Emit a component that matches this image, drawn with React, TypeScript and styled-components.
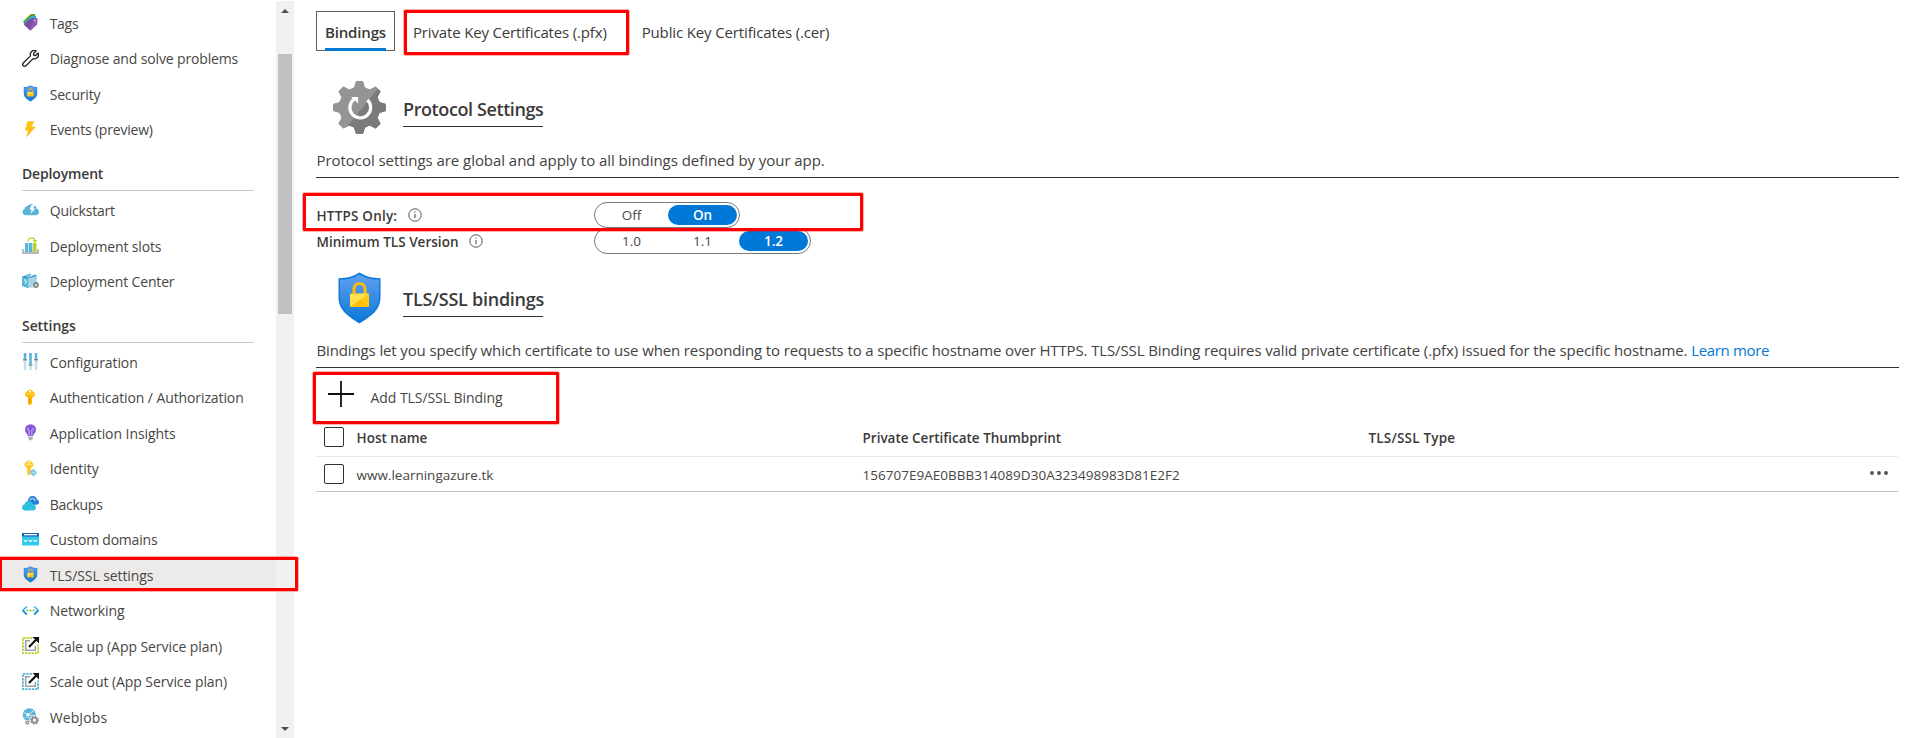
import React, { ReactNode } from 'react';
import styled, { createGlobalStyle, css } from 'styled-components';

const GlobalStyle = createGlobalStyle`
  * { box-sizing: border-box; }
  body {
    margin: 0;
    background: #fff;
    color: #3b3a39;
    font-family: "Open Sans", "Noto Sans", sans-serif;
    overflow: hidden;
  }
`;

const Page = styled.div`
  position: relative;
  display: flex;
  width: 100%;
  height: 738px;
  overflow: hidden;
`;

/* ---------- sidebar ---------- */

const Sidebar = styled.nav`
  width: 276px;
  flex: none;
  padding-top: 6.5px;
`;

const NavItem = styled.a<{ $selected?: boolean }>`
  display: flex;
  align-items: center;
  height: 31.5px;
  margin-bottom: 4px;
  padding-left: 22px;
  background: ${(p) => (p.$selected ? '#edebe9' : 'transparent')};
`;

const NavIcon = styled.span`
  display: flex;
  width: 17px;
  height: 17px;
  margin: 1px 10.7px 0 0;
  flex: none;
`;

const NavLabel = styled.span<{ $track: number }>`
  padding-top: 3px;
  color: #484644;
  font-size: 14px;
  line-height: 20px;
  white-space: nowrap;
  letter-spacing: ${(p) => p.$track}px;
`;

const NavHeading = styled.h2<{ $track: number }>`
  height: 44.5px;
  margin: -2px 22px 2.75px;
  padding-top: 17.5px;
  border-bottom: 1px solid #c8c8c8;
  font-size: 14px;
  font-weight: 600;
  line-height: 20px;
  letter-spacing: ${(p) => p.$track}px;
`;

const ScrollTrack = styled.div`
  display: flex;
  flex-direction: column;
  align-items: center;
  width: 18px;
  flex: none;
  margin-top: 1px;
  background: #f1f1f1;
`;

const ScrollArrow = styled.div<{ $down?: boolean }>`
  width: 8px;
  height: 4px;
  background: #505050;
  ${(p) =>
    p.$down
      ? css`
          margin: auto 0 7px;
          clip-path: polygon(0 0, 100% 0, 50% 100%);
        `
      : css`
          margin: 8px 0 0;
          clip-path: polygon(50% 0, 100% 100%, 0 100%);
        `}
`;

const ScrollThumb = styled.div`
  width: 14px;
  height: 260px;
  margin-top: 41px;
  background: #c1c1c1;
`;

/* ---------- main pane ---------- */

const Main = styled.main`
  flex: 1;
  padding: 11px 19px 0 22px;
`;

const Tabs = styled.div`
  display: flex;
  height: 40px;
`;

const Tab = styled.button<{ $active?: boolean; $track: number; $gap?: number }>`
  display: flex;
  height: 40px;
  margin: 0 0 0 ${(p) => p.$gap ?? 0}px;
  padding: 0;
  border: 0;
  background: none;
  color: inherit;
  font: 400 15px/42px "Open Sans", "Noto Sans", sans-serif;
  letter-spacing: ${(p) => p.$track}px;
  white-space: nowrap;
  ${(p) =>
    p.$active &&
    css`
      width: 79px;
      justify-content: center;
      border: 1px solid #5f5f5f;
      font-weight: 600;
      line-height: 40px;
    `}
`;

const TabText = styled.span`
  height: 39px;
  width: 61px;
  border-bottom: 3px solid #0078d4;
`;

const SectionHead = styled.header<{ $compact?: boolean }>`
  display: flex;
  align-items: flex-start;
  height: ${(p) => (p.$compact ? 84 : 97)}px;
  padding: ${(p) => (p.$compact ? 17.5 : 30)}px 0 0 17px;
`;

const SectionTitle = styled.h1<{ $track: number; $drop: number }>`
  width: 140px;
  margin: ${(p) => p.$drop}px 0 0 17px;
  border-bottom: 1px solid #323130;
  font-size: 18px;
  font-weight: 600;
  line-height: 34px;
  white-space: nowrap;
  letter-spacing: ${(p) => p.$track}px;
`;

const Description = styled.p<{ $track: number }>`
  height: 30px;
  margin: 0;
  padding-left: 0.5px;
  border-bottom: 1px solid #323130;
  color: #444240;
  font-size: 15px;
  line-height: 25px;
  white-space: nowrap;
  letter-spacing: ${(p) => p.$track}px;
`;

const Link = styled.a`
  color: #0078d4;
  letter-spacing: -0.33px;
`;

const Options = styled.div`
  padding-top: 24px;
`;

const OptionRow = styled.div`
  display: flex;
  align-items: center;
  height: 26px;
`;

const OptionLabel = styled.div<{ $track: number }>`
  display: flex;
  align-items: center;
  gap: 10.5px;
  width: 278px;
  padding-left: 0.5px;
  font-size: 13.5px;
  font-weight: 600;
  letter-spacing: ${(p) => p.$track}px;
  & > span {
    padding-top: 2px;
    line-height: 20px;
  }
`;

const Toggle = styled.div`
  display: flex;
  gap: 2px;
  height: 26px;
  padding: 2px;
  border: 1px solid #7a7a7a;
  border-radius: 13px;
`;

const ToggleCell = styled.span<{ $on?: boolean }>`
  width: 69px;
  height: 20px;
  border-radius: 10px;
  background: ${(p) => (p.$on ? '#0078d7' : 'transparent')};
  color: ${(p) => (p.$on ? '#fff' : '#484644')};
  font-size: 13.5px;
  font-weight: ${(p) => (p.$on ? 600 : 400)};
  line-height: 20px;
  text-align: center;
`;

const AddButton = styled.button`
  display: flex;
  align-items: center;
  height: 50px;
  padding: 2px 0 0 12px;
  border: 0;
  background: none;
  color: #484644;
  font: 400 14px/20px "Open Sans", "Noto Sans", sans-serif;
  letter-spacing: -0.06px;
  & > span {
    margin: 8px 0 0 16.5px;
  }
`;

const TableRow = styled.div<{ $head?: boolean }>`
  display: grid;
  grid-template-columns: 40.5px 506px 506px 1fr auto;
  align-items: center;
  height: ${(p) => (p.$head ? 39 : 35)}px;
  margin-right: 1px;
  padding-right: 10px;
  border-bottom: 1px solid ${(p) => (p.$head ? '#e8e8e8' : '#c4c4c4')};
  color: ${(p) => (p.$head ? '#3b3a39' : '#484644')};
  font-size: 13.5px;
  font-weight: ${(p) => (p.$head ? 600 : 400)};
`;

const Checkbox = styled.span`
  width: 20px;
  height: 20px;
  margin-left: 8px;
  border: 1px solid #323130;
  border-radius: 2px;
`;

const Cell = styled.span<{ $track?: number }>`
  padding-top: 1px;
  line-height: 20px;
  letter-spacing: ${(p) => p.$track ?? 0}px;
`;

const RowMenu = styled.span`
  display: flex;
  padding-bottom: 3px;
`;

const Marker = styled.div<{ $x: number; $y: number; $w: number; $h: number }>`
  position: absolute;
  left: ${(p) => p.$x}px;
  top: ${(p) => p.$y}px;
  width: ${(p) => p.$w}px;
  height: ${(p) => p.$h}px;
  border: 3px solid #ff0000;
  border-radius: 1px;
  box-shadow: 0 0 0 0.5px rgba(255, 0, 0, 0.6);
`;

/* ---------- icons ---------- */

const Glyph = ({ children }: { children: ReactNode }) => (
  <svg width="17" height="17" viewBox="0 0 17 17" fill="none">
    {children}
  </svg>
);

const TagsIcon = () => (
  <Glyph>
    <path d="M1 7.500 8.500.3 13 0v3L4 11 1 7.500Z" fill="#57a300" />
    <path d="M1.500 9 9 2 14 1.800V6L6 14 1.500 9Z" fill="#32a9d9" />
    <path d="m2.200 9.800 6.300-5.400 6.300-.3.600.8-.3 5.600-6 5.600a1.200 1.200 0 0 1-1.600 0L2.200 11Z" fill="#7f4aa3" />
    <path d="M12.500 4.800 15.400 5l-.3 5.400-6 5.600-1.500-.3Z" fill="#9b6cc0" opacity=".55" />
    <circle cx="12.700" cy="6.400" r=".9" fill="#d7c4e6" />
  </Glyph>
);

const WrenchIcon = () => (
  <Glyph>
    <path
      d="M14.200.9 11.600 3.500l.2 1.800 1.800.2 2.500-2.500c.8 2.300.1 4.300-1.600 5.300-1.200.7-2.300.7-3.400.3L4 15.700a1.900 1.900 0 0 1-2.700-2.700l7.200-7.100c-.5-1.200-.4-2.400.4-3.600C10.100.6 12.100 0 14.200.9Z"
      stroke="#222"
      strokeWidth="1.300"
      strokeLinejoin="round"
    />
  </Glyph>
);

const ShieldShapes = ({ id }: { id: string }) => (
  <>
    <defs>
      <linearGradient id={id} x1="0" y1="0" x2="0" y2="1">
        <stop offset="0" stopColor="#5ea0ef" />
        <stop offset="1" stopColor="#0f78d8" />
      </linearGradient>
    </defs>
    <path
      d="M5.500 6.200C14 6.200 19 5 26.500.6 34 5 39 6.200 47.500 6.200V25c0 14-10.500 19.500-21 26.500C16 44.500 5.500 39 5.500 25V6.200Z"
      fill="#0f7ad9"
    />
    <path
      d="M7 7.600C15 7.500 19.500 6.400 26.500 2.400 33.500 6.400 38 7.500 46 7.600V25c0 12.600-9.500 18-19.500 24.700C16.500 43 7 37.600 7 25V7.600Z"
      fill={`url(#${id})`}
    />
    <path
      d="M21 22v-5a5.500 5.500 0 0 1 11 0v5"
      fill="none"
      stroke="#f9b90c"
      strokeWidth="3.200"
    />
    <rect x="17" y="21.500" width="19" height="13.500" rx=".8" fill="#ffc812" />
    <path d="m17 22 19-.5L17 35Z" fill="#ffdf4a" />
    <path d="M17 35 27 28l9 7Z" fill="#ffbd02" />
  </>
);

const SmallShieldIcon = ({ id }: { id: string }) => (
  <svg width="17" height="17" viewBox="0 0 53 53">
    <ShieldShapes id={id} />
  </svg>
);

const BoltIcon = () => (
  <Glyph>
    <path d="M5.500.2h6.800L9.600 5.800h3.900L4.200 16.500l2-6.900H2.800L5.500.2Z" fill="#fcc419" />
    <path d="M9.600 5.800h3.900L4.200 16.500l2-6.900Z" fill="#ffb900" opacity=".6" />
  </Glyph>
);

const QuickstartIcon = () => (
  <Glyph>
    <path
      d="M3.200 13.200A3.200 3.200 0 0 1 2.600 7 C2.500 5.200 4 4 5.400 4.300 6.500 2 10.500 1.400 12 3.600c1.600-.2 2.600 1.400 2.300 2.900 1.700.3 2.700 1.700 2.700 3.400 0 1.900-1.300 3.300-3.200 3.300Z"
      fill="#59b4d9"
    />
    <path d="M9.500 3h3.200L11 6.500h2.400L8.300 12l1.500-4.300H7.600Z" fill="#fff" />
  </Glyph>
);

const SlotsIcon = () => (
  <Glyph>
    <path d="M1 12v4h15v-4" stroke="#a0a1a2" strokeWidth="1.400" />
    <path d="M3 6h3.400v9H3zM7 6h3.400v9H7z" fill="#59b4d9" />
    <path d="M11 6h3.500v9H11z" fill="#b8d432" />
    <path d="M6 4.200C6.500-.1 12.300-.1 12.800 3.500" stroke="#b8d432" strokeWidth="1.200" />
    <path d="M10.500 3h4.800l-2.400 3Z" fill="#b8d432" />
  </Glyph>
);

const CenterIcon = () => (
  <Glyph>
    <path d="m0 3.800 6-2.200 2.500 2-2 1.800V15L0 12.800Z" fill="#3999c6" />
    <path d="m0 4 6 1.500V15L0 12.800Z" fill="#59b4d9" />
    <path d="m3 2.300 5-2 1.500 1.700L6 5Z" fill="#7ac3e2" />
    <path d="m7 4.600 6-3.200 2 1.400-6 3Z" fill="#3999c6" />
    <path d="M7 5.200 15 3v8l-4 3.500-4 .2Z" fill="#a5d6ea" />
    <path d="M3 6v2l1.500.5L3 11" stroke="#fff" />
    <circle cx="14" cy="12" r="2" stroke="#8a8b8c" strokeWidth="1.800" />
  </Glyph>
);

const SlidersIcon = () => (
  <Glyph>
    <path d="M3 0v6M8.500 0v11M14 0v6" stroke="#59b4d9" strokeWidth="2.600" />
    <path d="M3 7v10M8.500 12v5M14 7v10" stroke="#bfe1ef" strokeWidth="2.600" />
    <path d="M1 6.800h4M6.500 12h4M12 6.800h4" stroke="#8a8b8c" strokeWidth="1.400" />
  </Glyph>
);

const KeyIcon = () => (
  <Glyph>
    <path d="M8 .4c1 0 5 3 5 4.600 0 1.500-1.200 3-2.900 3.700v5.500L8 16.600l-2-2.200V8.700C4.300 8 3 6.500 3 5 3 3.400 7 .4 8 .4Z" fill="#ffb900" />
    <path d="M4.300 5.200h7.400" stroke="#ffd94f" strokeWidth="1.200" />
    <circle cx="8" cy="2.700" r="1.100" fill="#fff" />
    <path d="M7.500 9v5.500" stroke="#e68a00" strokeWidth=".9" />
  </Glyph>
);

const BulbIcon = () => (
  <Glyph>
    <path d="M8.500.2a5.500 5.500 0 0 1 5.500 5.500c0 3-2.800 4-3 6.600H6C5.800 9.700 3 8.700 3 5.700A5.500 5.500 0 0 1 8.500.2Z" fill="#8257d8" />
    <path d="M7.200 11.500V6.200C5.500 6.500 5 4.200 6.700 4M9.800 11.500V6.200c1.700.3 2.200-2 .5-2.200" stroke="#c5a8f0" strokeWidth="1.100" />
    <path d="M6.200 13h4.600v1.600l-1 1.600H7.200l-1-1.600Z" fill="#b3b3b5" />
  </Glyph>
);

const IdentityIcon = () => (
  <Glyph>
    <path d="M7 .2c1 0 4.700 2.800 4.700 4.300 0 1.400-1.100 2.800-2.700 3.400v5.900l-2 2-1.900-2V7.900C3.500 7.300 2.300 5.900 2.300 4.500 2.300 3 6 .2 7 .2Z" fill="#fcc92f" />
    <path d="M3.600 4.700h6.800" stroke="#ffe27a" strokeWidth="1.200" />
    <circle cx="7" cy="2.300" r="1" fill="#fff" />
    <path d="m11.300 8.800 3.700 3.800-3.700 3.800-3.700-3.800Z" fill="#5fb8da" stroke="#cfeaf5" strokeWidth=".6" />
    <path d="M11.300 10v5M9 12.600h4.600" stroke="#d9f1fa" strokeWidth=".7" />
  </Glyph>
);

const BackupsIcon = () => (
  <Glyph>
    <path d="M6 6.500C6 3 8 1 10.700 1c2.400 0 3.800 1.400 4 3.400C16 4.700 17 5.600 17 7c0 1.700-1 2.700-2.600 2.700H8Z" fill="#1f7fd8" />
    <path d="M8 5.300c1.500-3 5-2 5 1" stroke="#b8dcf8" strokeWidth="1.200" />
    <path d="M3.500 15.600C1.500 15.600 0 14.300 0 12.500 0 11 1 9.900 2.500 9.600 2.900 7.300 4.500 6 6.700 6c2.100 0 3.800 1.300 4.200 3.400 1.800.1 3 1.300 3 3 0 1.900-1.400 3.200-3.300 3.200Z" fill="#2fbfe0" />
  </Glyph>
);

const DomainsIcon = () => (
  <Glyph>
    <rect x="0" y="2" width="17" height="12.500" rx=".5" fill="#32c8ea" />
    <rect x="0" y="2" width="17" height="3.500" fill="#1763b3" />
    <rect x="2" y="3" width="13" height="1.300" fill="#fff" />
    <path d="m2 8.700.8 2.200.8-1.800.8 1.800.8-2.200M6.800 8.700l.8 2.200.8-1.800.8 1.800.8-2.200M11.600 8.700l.8 2.200.8-1.800.8 1.800.8-2.200" stroke="#fff" strokeWidth=".8" />
  </Glyph>
);

const NetworkIcon = () => (
  <Glyph>
    <path d="M4.700 4.500.9 8.500l3.800 4M12.300 4.500l3.800 4-3.800 4" stroke="#35b6ee" strokeWidth="1.600" />
    <path d="M.9 8.500l3.800 4M16.100 8.500l-3.800 4" stroke="#1583dc" strokeWidth="1.600" />
    <g fill="#76bc2d">
      <circle cx="5.300" cy="8.500" r="1" />
      <circle cx="8.500" cy="8.500" r="1" />
      <circle cx="11.700" cy="8.500" r="1" />
    </g>
  </Glyph>
);

const ScaleIcon = ({ color }: { color: string }) => (
  <Glyph>
    <path d="M10 .9H.9v15.200h15.200V7.500" stroke={color} strokeWidth="1.800" strokeDasharray="2.400 .9" />
    <path d="M8 3.700H3.700v9.600h9.600V9" stroke="#a0a1a2" strokeWidth="1.600" />
    <path d="m7 10 7-7.300" stroke="#111" strokeWidth="2.100" />
    <path d="M10.500 0H17v6.500Z" fill="#111" />
  </Glyph>
);

const WebJobsIcon = () => (
  <Glyph>
    <circle cx="7.300" cy="6.800" r="6.600" fill="#59b4d9" />
    <path d="M2 4.500 6 7l6-4.500M6 7l2 5.500M3 10.500 6 7l7 1" stroke="#d8eef7" strokeWidth="1" />
    <circle cx="6" cy="6.500" r="1.600" fill="#fff" />
    <circle cx="12.500" cy="12.200" r="4.600" fill="#fff" />
    <circle cx="12.500" cy="12.200" r="2.600" stroke="#8a8b8c" strokeWidth="1.900" />
    <circle cx="12.500" cy="12.200" r="3.900" stroke="#8a8b8c" strokeWidth="1.200" strokeDasharray="1.500 1.560" />
    <circle cx="5.300" cy="14.500" r="2.500" fill="#fff" />
    <circle cx="5.300" cy="14.500" r="1.400" stroke="#8a8b8c" strokeWidth="1.300" />
  </Glyph>
);

const GEAR_POINTS = Array.from({ length: 8 }, (_, i) => {
  const a = (i * Math.PI) / 4;
  return [
    [-7.6, -18.6],
    [-5, -20],
    [-3.2, -26],
    [3.2, -26],
    [5, -20],
    [7.6, -18.6],
  ].map(([x, y]) =>
    [26.5 + x * Math.cos(a) - y * Math.sin(a), 26.5 + x * Math.sin(a) + y * Math.cos(a)]
      .map((n) => n.toFixed(2))
      .join(','),
  );
})
  .flat()
  .join(' ');

const GearIcon = () => (
  <svg width="53" height="53" viewBox="0 0 53 53">
    <defs>
      <clipPath id="gear-shade">
        <path d="M53 0v53H8L48 4Z" />
      </clipPath>
    </defs>
    <polygon points={GEAR_POINTS} fill="#949494" stroke="#949494" strokeLinejoin="round" />
    <polygon points={GEAR_POINTS} fill="#7a7a7a" stroke="#7a7a7a" strokeLinejoin="round" clipPath="url(#gear-shade)" />
    <path d="M34.500 19A10.400 10.400 0 1 1 21 18.200" fill="none" stroke="#fff" strokeWidth="3.200" />
    <path d="M18 16h7.200v6.500Z" fill="#fff" />
  </svg>
);

const BigShieldIcon = () => (
  <svg width="53" height="53" viewBox="0 0 53 53">
    <ShieldShapes id="shield-large" />
  </svg>
);

const InfoIcon = () => (
  <svg width="14" height="14" viewBox="0 0 14 14" fill="none">
    <circle cx="7" cy="7" r="6.200" stroke="#444" strokeWidth=".9" />
    <path d="M7 6v4.300M7 3.600v1.200" stroke="#444" />
  </svg>
);

const PlusIcon = () => (
  <svg width="26" height="26" viewBox="0 0 26 26">
    <path d="M0 13h26M13 0v26" stroke="#111" strokeWidth="1.800" />
  </svg>
);

const MoreIcon = () => (
  <svg width="18" height="4" viewBox="0 0 18 4" fill="#4f4f4f">
    <circle cx="2" cy="2" r="1.900" />
    <circle cx="9" cy="2" r="1.900" />
    <circle cx="16" cy="2" r="1.900" />
  </svg>
);

/* ---------- data ---------- */

type Entry = { label: string; track: number; icon: ReactNode; selected?: boolean };
type Group = { heading?: string; track?: number; entries: Entry[] };

const GROUPS: Group[] = [
  {
    entries: [
      { label: 'Tags', track: -0.3, icon: <TagsIcon /> },
      { label: 'Diagnose and solve problems', track: -0.14, icon: <WrenchIcon /> },
      { label: 'Security', track: -0.18, icon: <SmallShieldIcon id="shield-security" /> },
      { label: 'Events (preview)', track: -0.19, icon: <BoltIcon /> },
    ],
  },
  {
    heading: 'Deployment',
    track: -0.16,
    entries: [
      { label: 'Quickstart', track: -0.2, icon: <QuickstartIcon /> },
      { label: 'Deployment slots', track: -0.14, icon: <SlotsIcon /> },
      { label: 'Deployment Center', track: -0.16, icon: <CenterIcon /> },
    ],
  },
  {
    heading: 'Settings',
    track: -0.07,
    entries: [
      { label: 'Configuration', track: -0.1, icon: <SlidersIcon /> },
      { label: 'Authentication / Authorization', track: -0.1, icon: <KeyIcon /> },
      { label: 'Application Insights', track: -0.07, icon: <BulbIcon /> },
      { label: 'Identity', track: -0.06, icon: <IdentityIcon /> },
      { label: 'Backups', track: -0.26, icon: <BackupsIcon /> },
      { label: 'Custom domains', track: -0.21, icon: <DomainsIcon /> },
      { label: 'TLS/SSL settings', track: -0.08, icon: <SmallShieldIcon id="shield-tls" />, selected: true },
      { label: 'Networking', track: -0.07, icon: <NetworkIcon /> },
      { label: 'Scale up (App Service plan)', track: -0.07, icon: <ScaleIcon color="#b8d432" /> },
      { label: 'Scale out (App Service plan)', track: -0.06, icon: <ScaleIcon color="#59b4d9" /> },
      { label: 'WebJobs', track: 0.1, icon: <WebJobsIcon /> },
    ],
  },
];

export default function App() {
  return (
    <Page>
      <GlobalStyle />
      <Sidebar>
        {GROUPS.map((group, i) => (
          <React.Fragment key={i}>
            {group.heading && <NavHeading $track={group.track ?? 0}>{group.heading}</NavHeading>}
            {group.entries.map((entry) => (
              <NavItem key={entry.label} $selected={entry.selected}>
                <NavIcon>{entry.icon}</NavIcon>
                <NavLabel $track={entry.track}>{entry.label}</NavLabel>
              </NavItem>
            ))}
          </React.Fragment>
        ))}
      </Sidebar>
      <ScrollTrack>
        <ScrollArrow />
        <ScrollThumb />
        <ScrollArrow $down />
      </ScrollTrack>

      <Main>
        <Tabs>
          <Tab $active $track={-0.16}>
            <TabText>Bindings</TabText>
          </Tab>
          <Tab $track={-0.16} $gap={18}>Private Key Certificates (.pfx)</Tab>
          <Tab $track={-0.14} $gap={35}>Public Key Certificates (.cer)</Tab>
        </Tabs>

        <SectionHead>
          <GearIcon />
          <SectionTitle $track={-0.4} $drop={11}>Protocol Settings</SectionTitle>
        </SectionHead>
        <Description $track={-0.05}>
          Protocol settings are global and apply to all bindings defined by your app.
        </Description>

        <Options>
          <OptionRow>
            <OptionLabel $track={0.2}>
              <span>HTTPS Only:</span>
              <InfoIcon />
            </OptionLabel>
            <Toggle>
              <ToggleCell>Off</ToggleCell>
              <ToggleCell $on>On</ToggleCell>
            </Toggle>
          </OptionRow>
          <OptionRow>
            <OptionLabel $track={0.03}>
              <span>Minimum TLS Version</span>
              <InfoIcon />
            </OptionLabel>
            <Toggle>
              <ToggleCell>1.0</ToggleCell>
              <ToggleCell>1.1</ToggleCell>
              <ToggleCell $on>1.2</ToggleCell>
            </Toggle>
          </OptionRow>
        </Options>

        <SectionHead $compact>
          <BigShieldIcon />
          <SectionTitle $track={-0.26} $drop={10}>TLS/SSL bindings</SectionTitle>
        </SectionHead>
        <Description $track={-0.127}>
          Bindings let you specify which certificate to use when responding to requests to a specific hostname over
          HTTPS. TLS/SSL Binding requires valid private certificate (.pfx) issued for the specific hostname.{' '}
          <Link>Learn more</Link>
        </Description>

        <AddButton>
          <PlusIcon />
          <span>Add TLS/SSL Binding</span>
        </AddButton>

        <TableRow $head>
          <Checkbox />
          <Cell>Host name</Cell>
          <Cell>Private Certificate Thumbprint</Cell>
          <Cell $track={0.2}>TLS/SSL Type</Cell>
        </TableRow>
        <TableRow>
          <Checkbox />
          <Cell>www.learningazure.tk</Cell>
          <Cell $track={0.03}>156707E9AE0BBB314089D30A323498983D81E2F2</Cell>
          <span />
          <RowMenu>
            <MoreIcon />
          </RowMenu>
        </TableRow>
      </Main>

      <Marker $x={404} $y={10} $w={225} $h={45} />
      <Marker $x={303} $y={193} $w={560} $h={38} />
      <Marker $x={313} $y={372} $w={246} $h={52} />
      <Marker $x={-1} $y={557} $w={299} $h={34} />
    </Page>
  );
}
